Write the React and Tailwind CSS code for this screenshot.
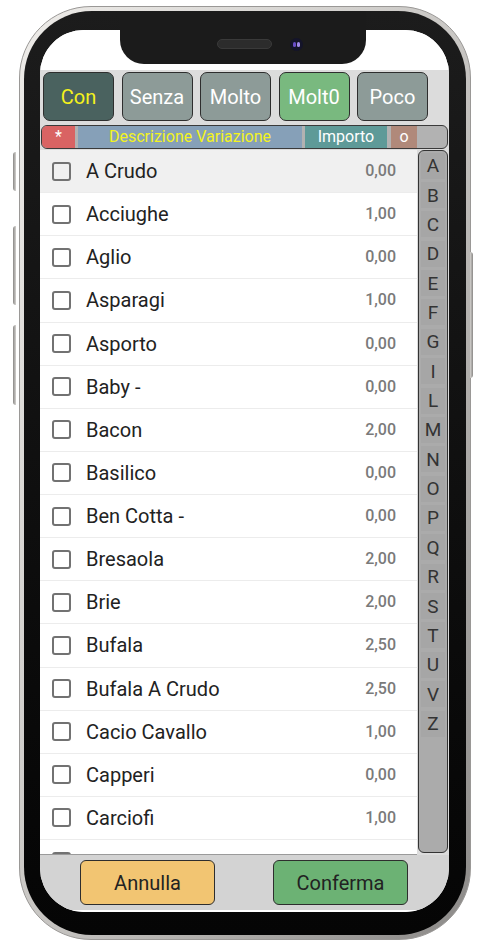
import React from 'react'

const MODI = [
  { label: 'Con', color: 'bg-[#4a625f] text-[#f4f21c]' },
  { label: 'Senza', color: 'bg-[#8d9b98] text-white' },
  { label: 'Molto', color: 'bg-[#8d9b98] text-white' },
  { label: 'Molt0', color: 'bg-[#79b97f] text-white' },
  { label: 'Poco', color: 'bg-[#8d9b98] text-white' },
]

const VARIAZIONI = [
  ['A Crudo', '0,00'],
  ['Acciughe', '1,00'],
  ['Aglio', '0,00'],
  ['Asparagi', '1,00'],
  ['Asporto', '0,00'],
  ['Baby -', '0,00'],
  ['Bacon', '2,00'],
  ['Basilico', '0,00'],
  ['Ben Cotta -', '0,00'],
  ['Bresaola', '2,00'],
  ['Brie', '2,00'],
  ['Bufala', '2,50'],
  ['Bufala A Crudo', '2,50'],
  ['Cacio Cavallo', '1,00'],
  ['Capperi', '0,00'],
  ['Carciofi', '1,00'],
  ['', ''],
]

const LETTERE = ['A', 'B', 'C', 'D', 'E', 'F', 'G', 'I', 'L', 'M', 'N', 'O', 'P', 'Q', 'R', 'S', 'T', 'U', 'V', 'Z']

function Riga({ nome, prezzo, first }) {
  return (
    <div className={`h-[43.13px] shrink-0 flex items-center pl-[12px] pr-[21px] border-b border-[#ececec] ${first ? 'bg-[#f0f0f0]' : 'bg-white'}`}>
      <div className="w-[19px] h-[19px] border-2 border-[#727272] rounded-[3px] shrink-0" />
      <div className="ml-[15px] flex-1 text-[20px] text-[#222] leading-none">{nome}</div>
      <div className="text-[16px] font-medium text-[#7a7a7a] leading-none">{prezzo}</div>
    </div>
  )
}

export default function App() {
  return (
    <div className="w-[484px] h-[945px] bg-white relative overflow-hidden font-['Roboto',sans-serif]">
      {/* tasti laterali */}
      <div className="absolute left-[13px] top-[152px] w-[3px] h-[39px] rounded-l-sm bg-gradient-to-r from-[#8a8886] to-[#d5d3d0]" />
      <div className="absolute left-[13px] top-[226px] w-[3px] h-[79px] rounded-l-sm bg-gradient-to-r from-[#8a8886] to-[#d5d3d0]" />
      <div className="absolute left-[13px] top-[325px] w-[3px] h-[80px] rounded-l-sm bg-gradient-to-r from-[#8a8886] to-[#d5d3d0]" />
      <div className="absolute left-[470px] top-[252px] w-[3px] h-[126px] rounded-r-sm bg-gradient-to-l from-[#8a8886] to-[#d5d3d0]" />

      {/* telefono */}
      <div className="ml-[19px] mt-[6px] w-[452px] h-[934px] rounded-[72px] p-[4px] bg-gradient-to-br from-[#eeece9] via-[#c9c7c4] to-[#8c8a88] border border-[#9a9896]">
        <div className="relative w-full h-full rounded-[68px] bg-gradient-to-b from-[#1c1c1c] to-[#050505] pt-[19px] pl-[16px] pr-[17px] pb-[23px]">
          {/* notch */}
          <div className="absolute left-[96px] top-0 w-[246px] h-[53px] bg-[#1b1b1b] rounded-b-[24px] z-10">
            <div className="absolute left-[97px] top-[28px] w-[55px] h-[10px] rounded-full bg-[#2c2c2c] border border-[#3a3a3a]" />
            <div className="absolute left-[170px] top-[27px] w-[13px] h-[13px] rounded-full bg-[#14142a] flex items-center justify-center gap-[1px]">
              <div className="w-[3px] h-[5px] rounded-full bg-[#6a4ec8]" />
              <div className="w-[3px] h-[5px] rounded-full bg-[#a08ae8]" />
            </div>
          </div>

          {/* schermo */}
          <div className="w-full h-full rounded-[44px] overflow-hidden bg-white flex flex-col">
            <div className="h-[40px] shrink-0 bg-white" />

            <div className="bg-[#dcdcdc] shrink-0 pt-[2px] pb-[1px]">
              <div className="flex gap-[7.5px] pl-[3px] h-[49px]">
                {MODI.map(m => (
                  <div
                    key={m.label}
                    className={`w-[71px] h-full rounded-[7px] border border-[#2e2e2e] flex items-center justify-center text-[20px] ${m.color}`}
                  >
                    {m.label}
                  </div>
                ))}
              </div>
              <div className="mt-[4px] ml-[1px] w-[407px] h-[24px] rounded-[6px] border border-[#3a3a3a] bg-[#b2b2b2] flex overflow-hidden text-[16px] leading-none">
                <div className="w-[33px] bg-[#d96363] text-white flex items-center justify-center">*</div>
                <div className="ml-[3px] w-[224px] bg-[#86a0b8] text-[#f3f31e] flex items-center justify-center">Descrizione Variazione</div>
                <div className="ml-[3px] w-[82px] bg-[#5e9a98] text-white flex items-center justify-center">Importo</div>
                <div className="ml-[4px] w-[26px] bg-[#b0897a] text-white flex items-center justify-center">o</div>
              </div>
            </div>

            <div className="h-[705px] shrink-0 flex bg-[#dcdcdc]">
              <div className="w-[377px] h-full flex flex-col overflow-hidden bg-white border-b border-[#9a9a9a]">
                {VARIAZIONI.map(([nome, prezzo], i) => (
                  <Riga key={i} nome={nome} prezzo={prezzo} first={i === 0} />
                ))}
              </div>
              <div className="ml-[1px] w-[30px] h-[703px] rounded-[6px] border border-[#333] bg-[#ababab] flex flex-col items-center">
                {LETTERE.map(l => (
                  <div key={l} className="h-[29.37px] shrink-0 flex items-center justify-center">
                    <div className="w-[24px] h-[26px] bg-[#a6a6a6] flex items-center justify-center text-[19px] text-[#333] leading-none">
                      {l}
                    </div>
                  </div>
                ))}
              </div>
            </div>

            <div className="h-[55px] shrink-0 bg-[#d3d3d3] flex items-center pl-[40px] gap-[58px] text-[20px] text-[#222]">
              <div className="w-[135px] h-[45px] rounded-[6px] border border-[#2e2e2e] bg-[#f2c572] flex items-center justify-center">Annulla</div>
              <div className="w-[135px] h-[45px] rounded-[6px] border border-[#2e2e2e] bg-[#6cb274] flex items-center justify-center">Conferma</div>
            </div>
            <div className="flex-1 bg-white" />
          </div>
        </div>
      </div>
    </div>
  )
}
